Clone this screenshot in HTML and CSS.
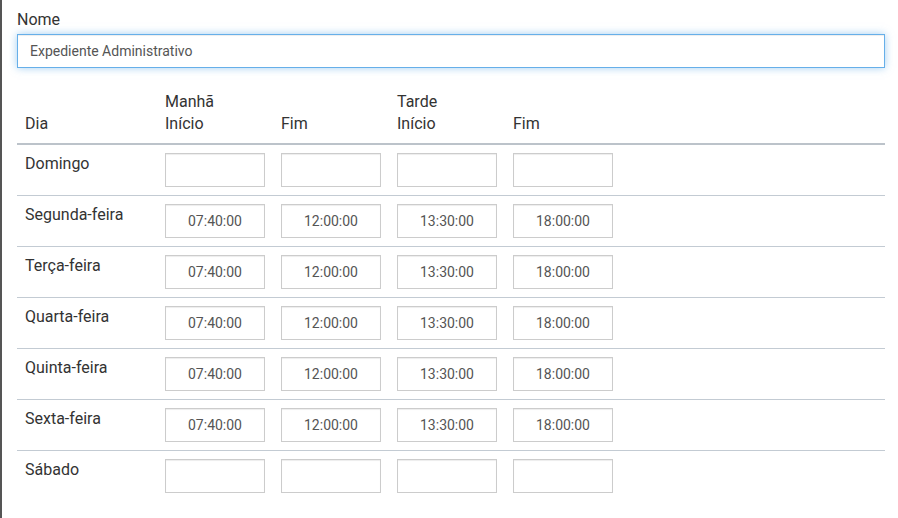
FILE: index.html
```html
<!DOCTYPE html>
<html lang="pt">
<head>
<meta charset="utf-8">
<link rel="stylesheet" href="styles.css">
</head>
<body>
<div class="page">
  <div class="form-group">
    <label class="label" for="nome">Nome</label>
    <input id="nome" class="input input-focus" type="text" value="Expediente Administrativo">
  </div>
  <div class="table">
    <div class="row head">
      <div class="cell">Dia</div>
      <div class="cell">Manhã<br>Início</div>
      <div class="cell">Fim</div>
      <div class="cell">Tarde<br>Início</div>
      <div class="cell">Fim</div>
      <div class="cell"></div>
    </div>
    <div class="row">
      <div class="cell">Domingo</div>
      <div class="cell"><input class="time" type="text" value=""></div>
      <div class="cell"><input class="time" type="text" value=""></div>
      <div class="cell"><input class="time" type="text" value=""></div>
      <div class="cell"><input class="time" type="text" value=""></div>
      <div class="cell"></div>
    </div>
    <div class="row">
      <div class="cell">Segunda-feira</div>
      <div class="cell"><input class="time" type="text" value="07:40:00"></div>
      <div class="cell"><input class="time" type="text" value="12:00:00"></div>
      <div class="cell"><input class="time" type="text" value="13:30:00"></div>
      <div class="cell"><input class="time" type="text" value="18:00:00"></div>
      <div class="cell"></div>
    </div>
    <div class="row">
      <div class="cell">Terça-feira</div>
      <div class="cell"><input class="time" type="text" value="07:40:00"></div>
      <div class="cell"><input class="time" type="text" value="12:00:00"></div>
      <div class="cell"><input class="time" type="text" value="13:30:00"></div>
      <div class="cell"><input class="time" type="text" value="18:00:00"></div>
      <div class="cell"></div>
    </div>
    <div class="row">
      <div class="cell">Quarta-feira</div>
      <div class="cell"><input class="time" type="text" value="07:40:00"></div>
      <div class="cell"><input class="time" type="text" value="12:00:00"></div>
      <div class="cell"><input class="time" type="text" value="13:30:00"></div>
      <div class="cell"><input class="time" type="text" value="18:00:00"></div>
      <div class="cell"></div>
    </div>
    <div class="row">
      <div class="cell">Quinta-feira</div>
      <div class="cell"><input class="time" type="text" value="07:40:00"></div>
      <div class="cell"><input class="time" type="text" value="12:00:00"></div>
      <div class="cell"><input class="time" type="text" value="13:30:00"></div>
      <div class="cell"><input class="time" type="text" value="18:00:00"></div>
      <div class="cell"></div>
    </div>
    <div class="row">
      <div class="cell">Sexta-feira</div>
      <div class="cell"><input class="time" type="text" value="07:40:00"></div>
      <div class="cell"><input class="time" type="text" value="12:00:00"></div>
      <div class="cell"><input class="time" type="text" value="13:30:00"></div>
      <div class="cell"><input class="time" type="text" value="18:00:00"></div>
      <div class="cell"></div>
    </div>
    <div class="row last">
      <div class="cell">Sábado</div>
      <div class="cell"><input class="time" type="text" value=""></div>
      <div class="cell"><input class="time" type="text" value=""></div>
      <div class="cell"><input class="time" type="text" value=""></div>
      <div class="cell"><input class="time" type="text" value=""></div>
      <div class="cell"></div>
    </div>
  </div>
</div>
</body>
</html>
```

FILE: styles.css
```css
html, body {
  margin: 0;
  padding: 0;
  background: #fff;
}
body {
  font-family: Roboto, "Liberation Sans", sans-serif;
  font-size: 16px;
  line-height: 22px;
  color: #333;
  border-left: 2px solid #555;
  min-height: 518px;
  box-sizing: border-box;
}
.page {
  padding: 9px 13px 0 15px;
}
.form-group {
  margin-bottom: 15px;
}
.label {
  display: block;
  margin-bottom: 3px;
  font-weight: 400;
}
.input {
  display: block;
  box-sizing: border-box;
  width: 100%;
  height: 34px;
  padding: 6px 12px;
  font-family: inherit;
  font-size: 14px;
  color: #555;
  background: #fff;
  border: 1px solid #ccc;
  border-radius: 0;
  outline: none;
}
.input-focus {
  border-color: #66afe9;
  box-shadow: inset 0 1px 1px rgba(0,0,0,.075), 0 0 8px rgba(102,175,233,.6);
}
.table {
  display: grid;
  grid-template-columns: 140px 116px 116px 116px 116px 1fr;
}
.row {
  display: contents;
}
.cell {
  padding: 8px;
  border-top: 1px solid #c3cbd3;
}
.head .cell {
  border-top: none;
  border-bottom: 2px solid #bcc3ca;
  display: flex;
  align-items: flex-end;
}
.row:nth-child(2) .cell {
  border-top: none;
}
.time {
  display: block;
  box-sizing: border-box;
  width: 100px;
  height: 34px;
  padding: 6px 8px;
  font-family: inherit;
  font-size: 14px;
  color: #555;
  text-align: center;
  background: #fff;
  border: 1px solid #ccc;
  border-radius: 0;
  box-shadow: inset 0 1px 1px rgba(0,0,0,.075);
  outline: none;
}
```
